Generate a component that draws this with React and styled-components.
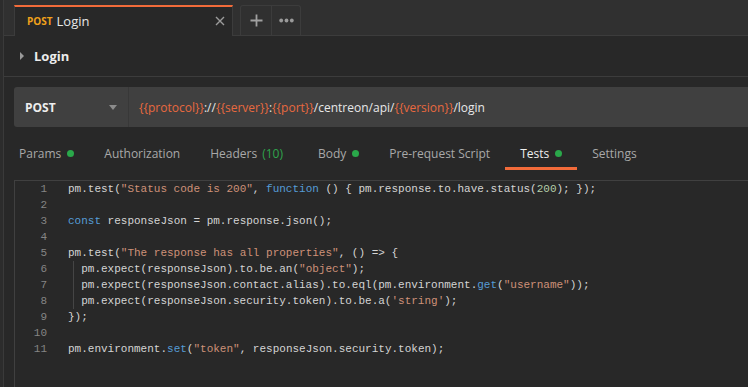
import React from "react";
import styled, { createGlobalStyle } from "styled-components";

const Global = createGlobalStyle`
  html, body { margin: 0; padding: 0; background: #282828; overflow: hidden; }
  #root { height: 387px; }
  * { box-sizing: border-box; }
`;

const Page = styled.div`
  height: 387px;
  width: 748px;
  padding-left: 3px;
  background: #2c2c2c;
  font-family: "Open Sans", "Liberation Sans", sans-serif;
  display: flex;
`;

const Frame = styled.div`
  flex: 1;
  min-width: 0;
  border-left: 1px solid #3a3a3a;
  background: #282828;
  display: flex;
  flex-direction: column;
  overflow: hidden;
`;

const TabBar = styled.div`
  height: 36px;
  flex: none;
  background: #303030;
  border-bottom: 1px solid #3c3c3c;
  display: flex;
  align-items: flex-end;
  padding-left: 10px;
  gap: 7px;
`;

const ActiveTab = styled.div`
  width: 219px;
  height: 31px;
  margin-bottom: -1px;
  background: #282828;
  border-top: 2px solid #f26b3a;
  border-left: 1px solid #3c3c3c;
  border-right: 1px solid #3c3c3c;
  display: flex;
  align-items: center;
  padding: 0 7px 1px 12px;
`;

const Method = styled.span`
  color: #f0a11b;
  font-size: 10px;
  font-weight: 700;
  margin-right: 4px;
`;

const TabTitle = styled.span`
  color: #e6e6e6;
  font-size: 13px;
  flex: 1;
`;

const IconGroup = styled.div`
  height: 30px;
  display: flex;
  border: 1px solid #3c3c3c;
  border-bottom: none;
  border-radius: 3px 3px 0 0;
`;

const IconButton = styled.div`
  width: ${(p) => p.$w}px;
  display: flex;
  align-items: center;
  justify-content: center;
  border-left: ${(p) => (p.$divider ? "1px solid #3c3c3c" : "none")};
`;

const Header = styled.div`
  height: 41px;
  flex: none;
  border-bottom: 1px solid #3c3c3c;
  display: flex;
  align-items: center;
  padding-left: 16px;
  gap: 10px;
`;

const HeaderTitle = styled.span`
  color: #ececec;
  font-size: 13px;
  font-weight: 700;
`;

const UrlBar = styled.div`
  margin: 10px 0 0 10px;
  height: 40px;
  flex: none;
  display: flex;
  background: #404040;
  border-radius: 3px 0 0 3px;
`;

const MethodSelect = styled.div`
  width: 115px;
  display: flex;
  align-items: center;
  justify-content: space-between;
  padding: 0 11px 0 11px;
  border-right: 1px solid #383838;
  color: #eeeeee;
  font-size: 12px;
  font-weight: 700;
`;

const UrlText = styled.div`
  display: flex;
  align-items: center;
  padding-left: 10px;
  font-size: 12px;
  color: #e8e8e8;
  white-space: pre;
`;

const Var = styled.span`
  color: #e8693f;
`;

const ReqTabs = styled.div`
  margin-top: 12px;
  display: flex;
  flex: none;
`;

const ReqTab = styled.div`
  height: 31px;
  padding: 0 15px;
  display: flex;
  align-items: center;
  gap: 5px;
  font-size: 12px;
  color: ${(p) => (p.$active ? "#efefef" : "#a9a9a9")};
  border-bottom: 3px solid ${(p) => (p.$active ? "#f26b3a" : "transparent")};
  padding-top: 1px;
`;

const Dot = styled.span`
  width: 7px;
  height: 7px;
  border-radius: 50%;
  background: #2aa84a;
  margin-left: 1px;
`;

const Count = styled.span`
  color: #2fa44c;
  margin-right: 5px;
`;

const Editor = styled.div`
  margin: 10px 0 0 10px;
  flex: 1;
  border-top: 1px solid #404040;
  border-left: 1px solid #404040;
  display: flex;
  font-family: "Liberation Mono", "DejaVu Sans Mono", monospace;
  font-size: 11px;
  line-height: 16px;
`;

const Gutter = styled.div`
  width: 40px;
  flex: none;
  padding-right: 8px;
  text-align: right;
  color: #858585;
`;

const Code = styled.div`
  padding-left: 13px;
  color: #d4d4d4;
  white-space: pre;
`;

const Line = styled.div`
  height: 16px;
`;

const Tok = styled.span`
  color: ${(p) =>
    ({ s: "#ce9178", k: "#569cd6", n: "#b5cea8", t: "#d4d4d4" }[p.$t])};
`;

const Indent = styled.span`
  display: inline-block;
  width: 2ch;
  height: 16px;
  vertical-align: top;
  background: linear-gradient(#454545, #454545) 5px 0 / 1px 100% no-repeat;
`;

const lines = [
  [["t", "pm.test("], ["s", '"Status code is 200"'], ["t", ", "], ["k", "function"], ["t", " () { pm.response.to.have.status("], ["n", "200"], ["t", "); });"]],
  [],
  [["k", "const"], ["t", " responseJson = pm.response.json();"]],
  [],
  [["t", "pm.test("], ["s", '"The response has all properties"'], ["t", ", () => {"]],
  [["i"], ["t", "pm.expect(responseJson).to.be.an("], ["s", '"object"'], ["t", ");"]],
  [["i"], ["t", "pm.expect(responseJson.contact.alias).to.eql(pm.environment."], ["k", "get"], ["t", "("], ["s", '"username"'], ["t", "));"]],
  [["i"], ["t", "pm.expect(responseJson.security.token).to.be.a("], ["s", "'string'"], ["t", ");"]],
  [["t", "});"]],
  [],
  [["t", "pm.environment."], ["k", "set"], ["t", "("], ["s", '"token"'], ["t", ", responseJson.security.token);"]],
];

const tabs = [
  { label: "Params", dot: true },
  { label: "Authorization" },
  { label: "Headers", count: "(10)" },
  { label: "Body", dot: true },
  { label: "Pre-request Script" },
  { label: "Tests", dot: true, active: true },
  { label: "Settings" },
];

export default function App() {
  return (
    <>
      <Global />
      <Page>
        <Frame>
          <TabBar>
            <ActiveTab>
              <Method>POST</Method>
              <TabTitle>Login</TabTitle>
              <svg width="10" height="10" viewBox="0 0 10 10">
                <path d="M1 1L9 9M9 1L1 9" stroke="#9b9b9b" strokeWidth="1.4" />
              </svg>
            </ActiveTab>
            <IconGroup>
              <IconButton $w={30}>
                <svg width="13" height="13" viewBox="0 0 13 13">
                  <path d="M6.5 0.5V12.5M0.5 6.5H12.5" stroke="#a0a0a0" strokeWidth="1.8" />
                </svg>
              </IconButton>
              <IconButton $w={29} $divider>
                <svg width="15" height="5" viewBox="0 0 15 5">
                  <circle cx="2.2" cy="2.5" r="1.9" fill="#9a9a9a" />
                  <circle cx="7.5" cy="2.5" r="1.9" fill="#9a9a9a" />
                  <circle cx="12.8" cy="2.5" r="1.9" fill="#9a9a9a" />
                </svg>
              </IconButton>
            </IconGroup>
          </TabBar>
          <Header>
            <svg width="4" height="8" viewBox="0 0 4 8">
              <path d="M0 0L4 4L0 8Z" fill="#9a9a9a" />
            </svg>
            <HeaderTitle>Login</HeaderTitle>
          </Header>
          <UrlBar>
            <MethodSelect>
              <span>POST</span>
              <svg width="8" height="5" viewBox="0 0 8 5">
                <path d="M0 0H8L4 5Z" fill="#8c8c8c" />
              </svg>
            </MethodSelect>
            <UrlText>
              <Var>{"{{protocol}}"}</Var>://<Var>{"{{server}}"}</Var>:<Var>{"{{port}}"}</Var>/centreon/api/<Var>{"{{version}}"}</Var>/login
            </UrlText>
          </UrlBar>
          <ReqTabs>
            {tabs.map((t) => (
              <ReqTab key={t.label} $active={t.active}>
                {t.label}
                {t.count && <Count>{t.count}</Count>}
                {t.dot && <Dot />}
              </ReqTab>
            ))}
          </ReqTabs>
          <Editor>
            <Gutter>
              {lines.map((_, i) => (
                <Line key={i}>{i + 1}</Line>
              ))}
            </Gutter>
            <Code>
              {lines.map((l, i) => (
                <Line key={i}>
                  {l.map(([type, text], j) =>
                    type === "i" ? <Indent key={j} /> : <Tok key={j} $t={type}>{text}</Tok>
                  )}
                </Line>
              ))}
            </Code>
          </Editor>
        </Frame>
      </Page>
    </>
  );
}
